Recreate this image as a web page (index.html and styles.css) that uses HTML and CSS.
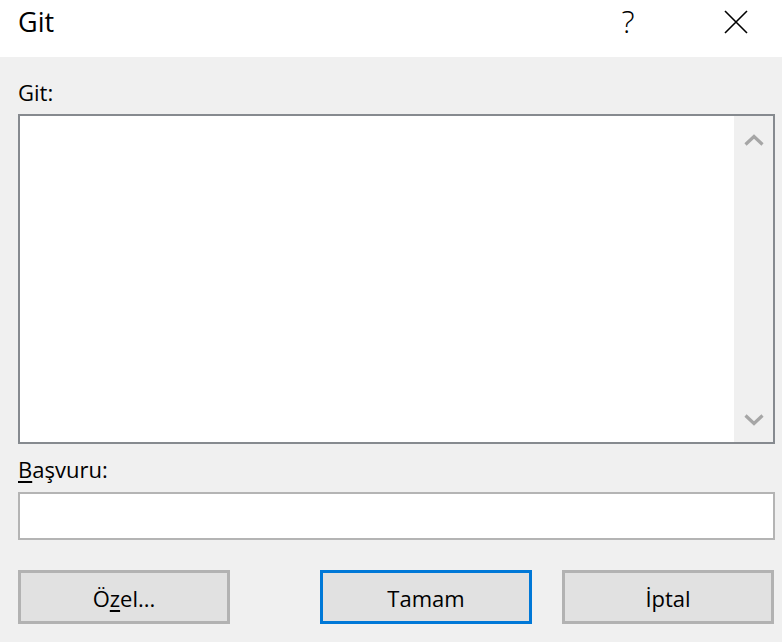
FILE: index.html
```html
<!DOCTYPE html>
<html lang="tr">
<head>
<meta charset="utf-8">
<title>Git</title>
<link rel="stylesheet" href="styles.css">
</head>
<body>
<div class="dialog">
  <div class="titlebar">
    <div class="title">Git</div>
    <div class="help">?</div>
    <svg class="close" width="24" height="24" viewBox="0 0 24 24"><path d="M1 1 L23 23 M23 1 L1 23" stroke="#000" stroke-width="1.6" fill="none"/></svg>
  </div>
  <div class="body">
    <div class="label label-git">Git:</div>
    <div class="listbox">
      <div class="listarea"></div>
      <div class="scrollbar">
        <svg class="chev" width="20" height="12" viewBox="0 0 20 12"><path d="M1.5 10.5 L10 2.5 L18.5 10.5" stroke="#a6a6a6" stroke-width="3.2" fill="none"/></svg>
        <svg class="chev" width="20" height="12" viewBox="0 0 20 12"><path d="M1.5 1.5 L10 9.5 L18.5 1.5" stroke="#a6a6a6" stroke-width="3.2" fill="none"/></svg>
      </div>
    </div>
    <div class="label label-ref"><u>B</u>aşvuru:</div>
    <div class="textbox"></div>
    <div class="buttons">
      <div class="btn">Ö<u>z</u>el...</div>
      <div class="btn-group">
        <div class="btn btn-default">Tamam</div>
        <div class="btn">İptal</div>
      </div>
    </div>
  </div>
</div>
</body>
</html>
```

FILE: styles.css
```css
html, body {
  margin: 0;
  padding: 0;
}
body {
  width: 782px;
  height: 642px;
  overflow: hidden;
  font-family: "Open Sans", "Noto Sans", sans-serif;
  color: #000;
  background: #f0f0f0;
}
.dialog {
  display: flex;
  flex-direction: column;
  height: 642px;
}
.titlebar {
  height: 57px;
  background: #fff;
  display: flex;
  align-items: center;
  padding-left: 18px;
  box-sizing: border-box;
}
.title {
  flex: 1;
  font-size: 27px;
  line-height: 1;
  margin-top: -14px;
}
.help {
  font-size: 31px;
  font-weight: 300;
  line-height: 1;
  margin-top: -14px;
  width: 14px;
  text-align: center;
}
.close {
  margin-left: 89px;
  margin-right: 34px;
  margin-top: -14px;
}
.body {
  flex: 1;
  background: #f0f0f0;
  padding: 0 7px 0 18px;
  display: flex;
  flex-direction: column;
}
.label {
  font-size: 22px;
  line-height: 28px;
}
.label-git {
  margin-top: 21px;
  height: 36px;
}
.label-ref {
  margin-top: 11px;
  height: 37px;
}
.label u {
  text-decoration-thickness: 2px;
  text-underline-offset: 3px;
}
.listbox {
  height: 330px;
  box-sizing: border-box;
  border: 2px solid #868a8f;
  background: #fff;
  display: flex;
}
.listarea {
  flex: 1;
}
.scrollbar {
  width: 39px;
  background: #f0f0f0;
  display: flex;
  flex-direction: column;
  justify-content: space-between;
  align-items: center;
  padding: 18px 0 16px;
}
.textbox {
  height: 48px;
  box-sizing: border-box;
  border: 2px solid #b4b4b4;
  background: #fff;
}
.buttons {
  margin-top: 30px;
  display: flex;
  justify-content: space-between;
  padding-right: 1px;
}
.btn-group {
  display: flex;
  gap: 30px;
}
.btn {
  width: 212px;
  height: 54px;
  box-sizing: border-box;
  border: 3px solid #b2b2b2;
  background: #e1e1e1;
  display: flex;
  align-items: center;
  justify-content: center;
  font-size: 22px;
  padding-top: 2px;
}
.btn u {
  text-decoration-thickness: 2px;
  text-underline-offset: 3px;
}
.btn-default {
  border-color: #0078d7;
}
```
